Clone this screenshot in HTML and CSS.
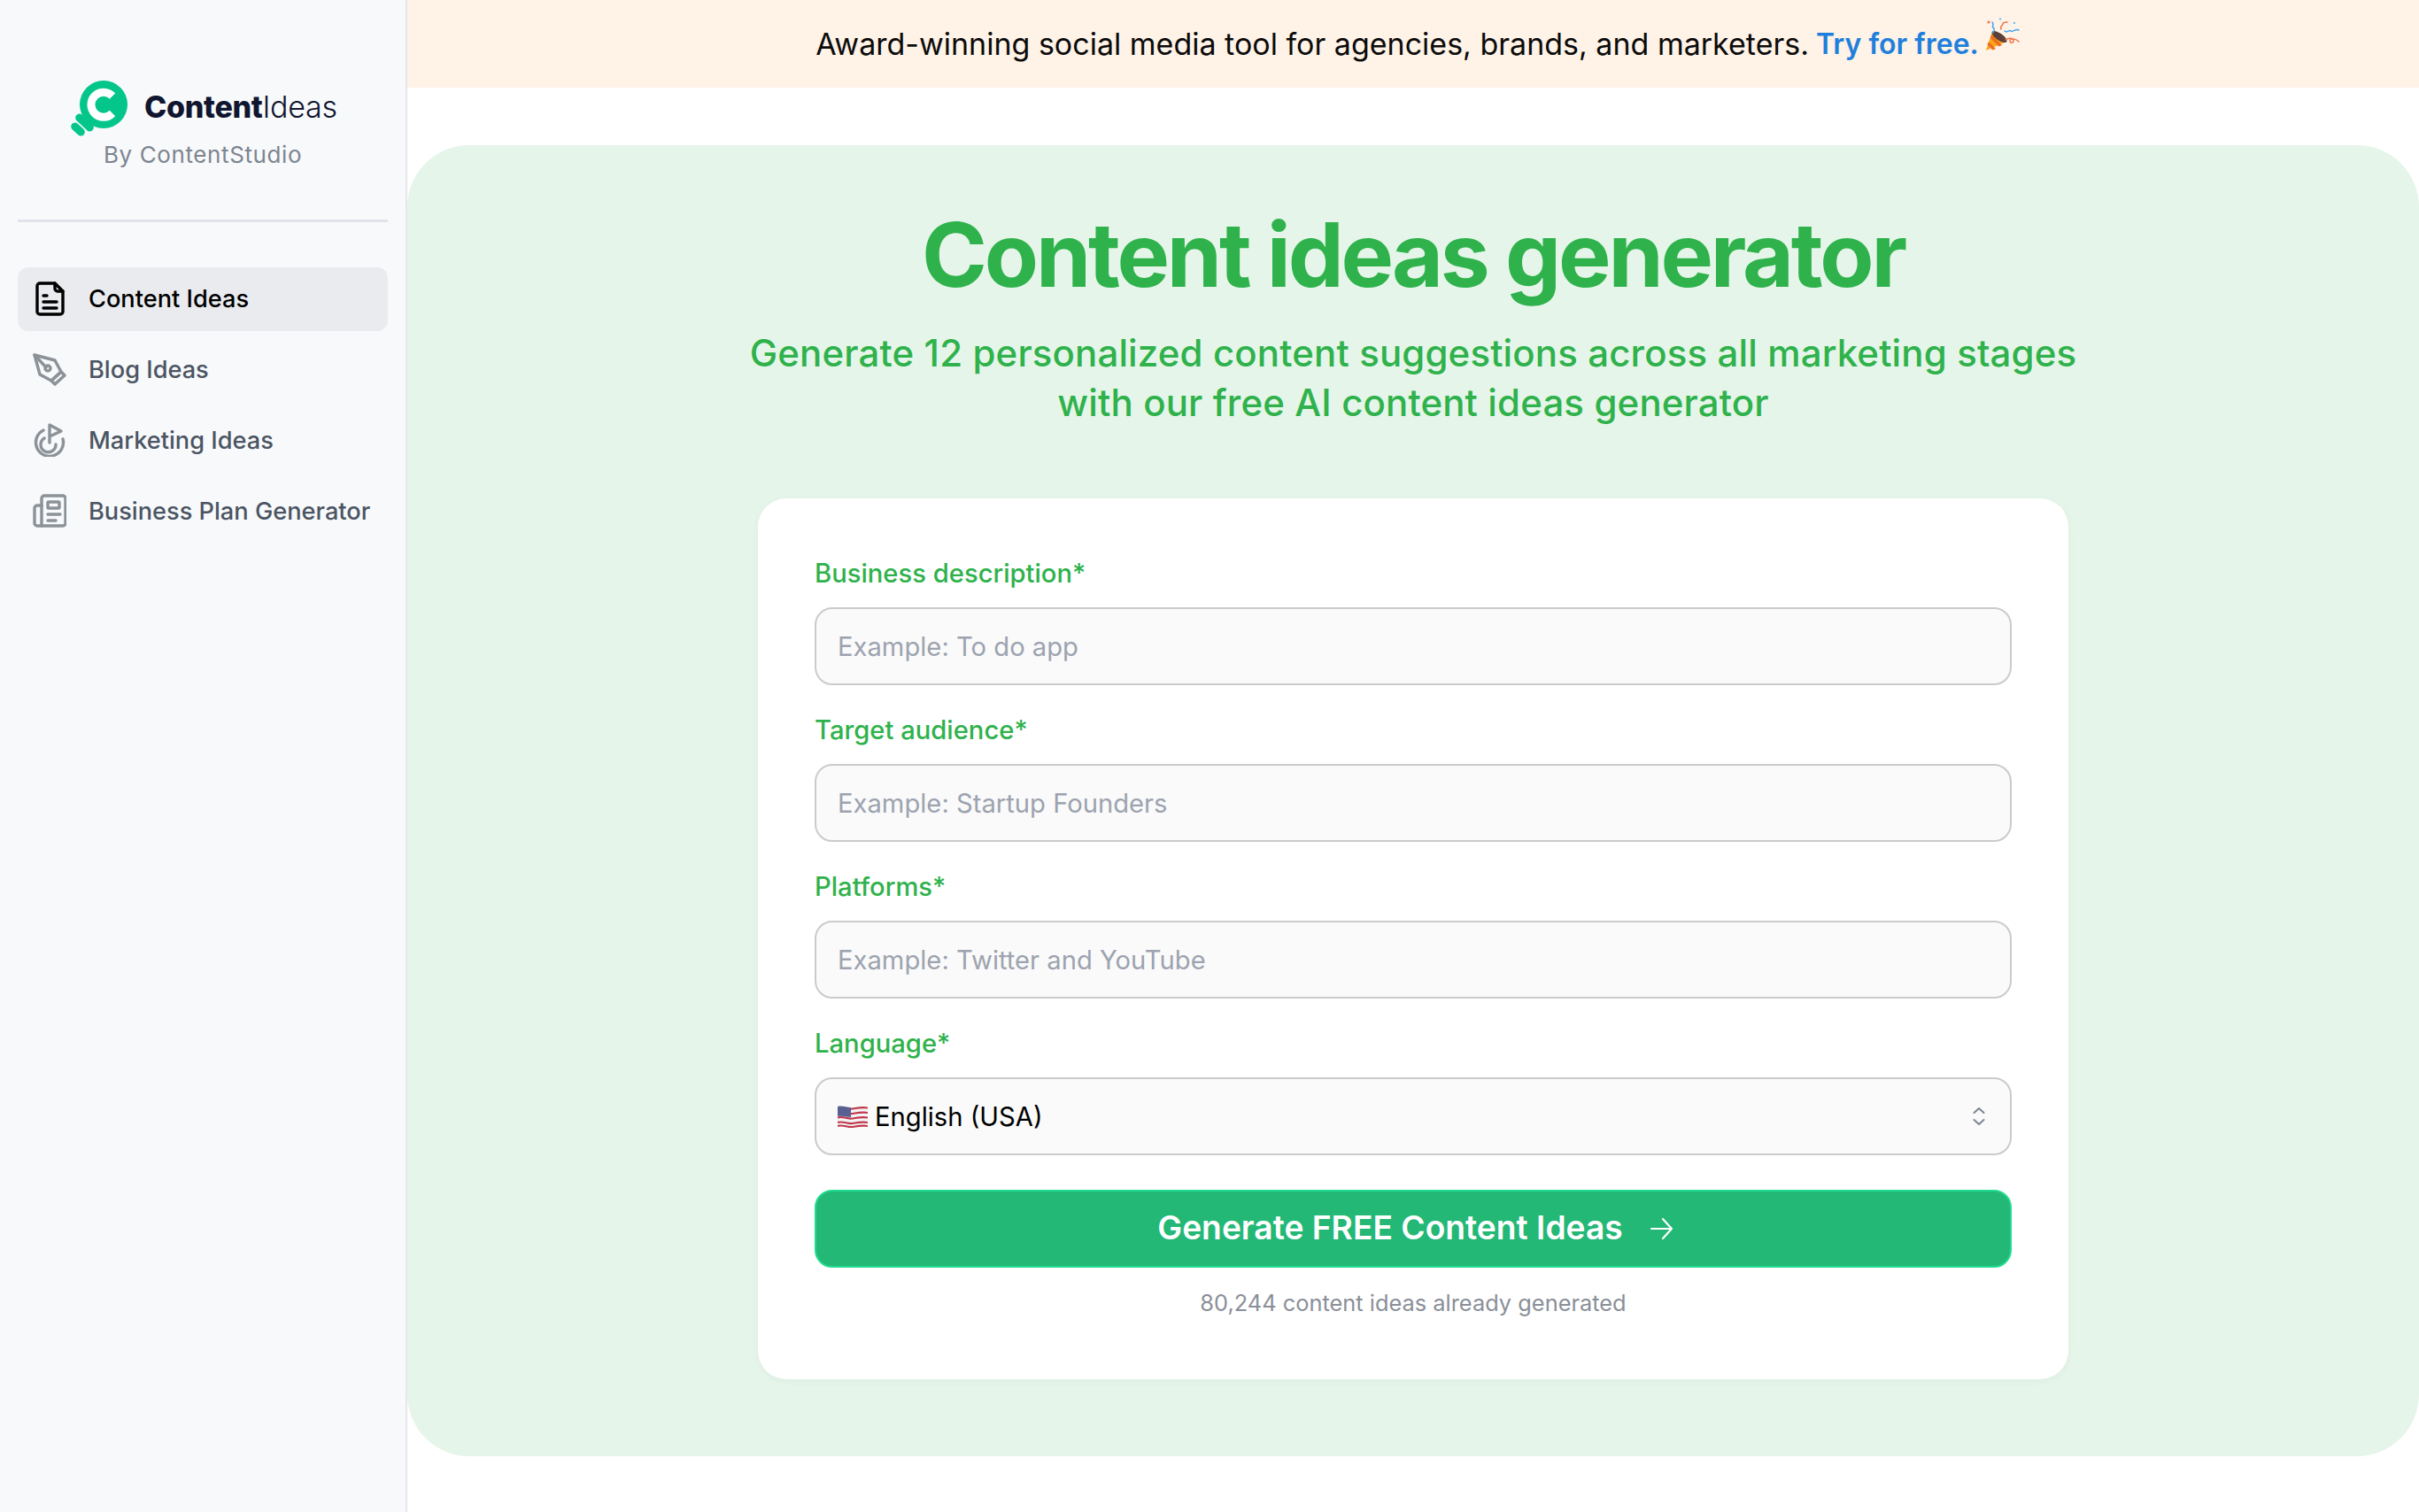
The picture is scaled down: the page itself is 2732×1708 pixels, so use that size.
FILE: index.html

```html
<!DOCTYPE html>
<html lang="en">
<head>
    <meta charset="UTF-8">
    <title>Content Ideas Generator</title>
    <link rel="stylesheet" href="styles.css">
</head>
<body>
<aside class="sidebar">
    <div class="brand">
        <div class="logo">
            <svg class="logo-mark" width="68" height="64" viewBox="0 0 68 64">
                <circle cx="39" cy="28" r="27" fill="#04c68a"/>
                <path d="M49 18.500A14 14 0 1 0 49 38" fill="none" stroke="#fff" stroke-width="9"/>
                <rect x="5" y="44" width="25" height="9" rx="4.500" transform="rotate(43 17.500 48.500)" fill="#04c68a"/>
                <rect x="1" y="51.500" width="18" height="9" rx="4.500" transform="rotate(43 10 56)" fill="#04c68a"/>
            </svg>
            <span class="logo-text"><b>Content</b>Ideas</span>
        </div>
        <div class="brand-by">By ContentStudio</div>
    </div>
    <nav class="nav">
        <a class="nav-item active">
            <svg class="nav-icon" viewBox="0 0 36 40" width="36" height="40" fill="none" stroke="currentColor" stroke-width="3.400" stroke-linejoin="round" stroke-linecap="round">
                <path d="M7 3h17l9 9v23a3 3 0 0 1-3 3H7a3 3 0 0 1-3-3V6a3 3 0 0 1 3-3z"/>
                <path d="M24 3v6a3 3 0 0 0 3 3h6"/>
                <path d="M11 17h4M11 24h15M11 31h15"/>
            </svg>
            Content Ideas
        </a>
        <a class="nav-item">
            <svg class="nav-icon" viewBox="0 0 38 38" width="38" height="38" fill="none" stroke="currentColor" stroke-width="3.400" stroke-linejoin="round" stroke-linecap="round">
                <path d="M2 3l23 6 7 13-11 10-13-7z"/>
                <path d="M2 3l13 14"/>
                <circle cx="17" cy="18" r="3"/>
                <path d="M21 32l11-10 4 4-11 10z"/>
            </svg>
            Blog Ideas
        </a>
        <a class="nav-item">
            <svg class="nav-icon" viewBox="0 0 36 38" width="36" height="38" fill="none" stroke="currentColor" stroke-width="3.400" stroke-linejoin="round" stroke-linecap="round">
                <path d="M11 8a15.500 15.500 0 1 0 22 10"/>
                <path d="M12 17a8.500 8.500 0 1 0 13 7"/>
                <path d="M18 22V2l13 7-13 6"/>
            </svg>
            Marketing Ideas
        </a>
        <a class="nav-item">
            <svg class="nav-icon" viewBox="0 0 38 38" width="38" height="38" fill="none" stroke="currentColor" stroke-width="3.400" stroke-linejoin="round" stroke-linecap="round">
                <path d="M10 36h24a3 3 0 0 0 3-3V5a3 3 0 0 0-3-3H13a3 3 0 0 0-3 3v31z"/>
                <path d="M10 13H5a3 3 0 0 0-3 3v17a3 3 0 0 0 3 3h5"/>
                <rect x="17" y="9" width="13" height="7" rx="1"/>
                <path d="M17 23h14M17 30h9"/>
            </svg>
            Business Plan Generator
        </a>
    </nav>
</aside>

<main class="main">
    <div class="banner">
        Award-winning social media tool for agencies, brands, and marketers.
        <a class="banner-link">Try for free.</a>
        <svg class="popper" width="38" height="38" viewBox="0 0 38 38">
            <path d="M7 16L0 37l23-10z" fill="#f9a814"/>
            <path d="M3 27l8 8-3.500 1.500-6-6zM6 19l12 12-3.500 1.500L5 23z" fill="#f06c23"/>
            <ellipse cx="15" cy="21.500" rx="4" ry="10" transform="rotate(-55 15 21.500)" fill="#5d4037"/>
            <g fill="none" stroke-width="1.500" stroke-linecap="round">
                <path d="M7 5c3 3-2 5 2 7 1 1 0 3-1 5" stroke="#42a5f5"/>
                <path d="M17 13c-2-3 2-4 2-6s3-2 5-2" stroke="#f0744a"/>
                <path d="M21 15c3 3 5-2 7 0s5-3 9-1" stroke="#42a5f5"/>
                <path d="M22 25c4-3 9-2 9 1s-4 3-4 0 6-3 10 1" stroke="#f0744a"/>
            </g>
            <circle cx="3" cy="5" r="1.500" fill="#f0744a"/>
            <circle cx="16" cy="1.500" r="1" fill="#42a5f5"/>
            <circle cx="32" cy="6" r="1" fill="#42a5f5"/>
        </svg>
    </div>

    <section class="panel">
        <h1 class="title">Content ideas generator</h1>
        <p class="subtitle">Generate 12 personalized content suggestions across all marketing stages<br>with our free AI content ideas generator</p>

        <form class="card">
            <label class="field-label" for="business">Business description*</label>
            <input class="field" id="business" type="text" placeholder="Example: To do app">

            <label class="field-label" for="audience">Target audience*</label>
            <input class="field" id="audience" type="text" placeholder="Example: Startup Founders">

            <label class="field-label" for="platforms">Platforms*</label>
            <input class="field" id="platforms" type="text" placeholder="Example: Twitter and YouTube">

            <label class="field-label">Language*</label>
            <div class="field select">
                <svg class="flag" width="34" height="26" viewBox="0 0 34 26">
                    <path d="M0 2c6-2 11 2 17 1s11-2 17-1v22c-6-1-11 0-17 1S6 22 0 24z" fill="#f4f4f6"/>
                    <g fill="none" stroke="#c0394b" stroke-width="2.200">
                        <path d="M0 3.500c6-2 11 2 17 1s11-2 17-1"/>
                        <path d="M0 9c6-2 11 2 17 1s11-2 17-1"/>
                        <path d="M0 14.500c6-2 11 2 17 1s11-2 17-1"/>
                        <path d="M0 20c6-2 11 2 17 1s11-2 17-1"/>
                        <path d="M0 24c6-2 11 2 17 1s11-2 17-1"/>
                    </g>
                    <path d="M0 2c5-1.500 10 1 15 1v11c-5 0-10-2-15-1z" fill="#5a5f92"/>
                </svg>
                <span>English (USA)</span>
                <svg class="chevrons" width="14" height="22" viewBox="0 0 14 22" fill="none" stroke="#7d8694" stroke-width="2" stroke-linecap="round" stroke-linejoin="round">
                    <path d="M1.500 7L7 2l5.500 5M1.500 15L7 20l5.500-5"/>
                </svg>
            </div>

            <button class="submit" type="button">
                Generate FREE Content Ideas
                <svg class="submit-arrow" width="28" height="28" viewBox="0 0 28 28" fill="none" stroke="#fff" stroke-width="2.200" stroke-linecap="round" stroke-linejoin="round">
                    <path d="M2 14h23M15 3l10 11-10 11"/>
                </svg>
            </button>
            <p class="count">80,244 content ideas already generated</p>
        </form>
    </section>
</main>
</body>
</html>
```

FILE: styles.css

```css
* {
    box-sizing: border-box;
}
body {
    margin: 0;
    display: flex;
    min-height: 1708px;
    font-family: Inter, "Noto Sans", sans-serif;
    background: #fff;
    color: #000;
}
.sidebar {
    flex: 0 0 460px;
    background: #f8f9fb;
    border-right: 2px solid #e5e7eb;
    padding: 0 20px;
}
.brand {
    height: 251px;
    padding-top: 90px;
    border-bottom: 3px solid #e1e3ea;
}
.logo {
    display: flex;
    align-items: center;
    margin-left: 58px;
}
.logo-text {
    margin: 0 0 3px 17px;
    font-size: 34px;
    font-weight: 300;
    color: #10162f;
    letter-spacing: -0.3px;
}
.logo-text b {
    font-weight: 800;
}
.brand-by {
    margin: 5px 0 0 97px;
    font-size: 26px;
    color: #7d8590;
    letter-spacing: 0.6px;
}
.nav {
    margin-top: 51px;
    display: flex;
    flex-direction: column;
    gap: 8px;
}
.nav-item {
    display: flex;
    align-items: center;
    height: 72px;
    padding-bottom: 2px;
    border-radius: 12px;
    font-size: 27.2px;
    font-weight: 500;
    color: #4b5563;
}
.nav-item.active {
    background: #e9ebee;
    color: #000;
}
.nav-icon {
    flex: none;
    margin: 0 25px 0 17px;
    width: 38px;
    color: #8b9298;
}
.active .nav-icon {
    color: #000;
}
.main {
    flex: 1;
    min-width: 0;
}
.banner {
    height: 99px;
    padding-left: 10px;
    background: #fff2e6;
    display: flex;
    align-items: center;
    justify-content: center;
    gap: 8px;
    font-size: 34px;
    color: #0b0b0b;
}
.banner-link {
    color: #1e80dc;
    font-size: 32px;
    font-weight: 600;
}
.popper {
    margin: -22px 0 0 0;
}
.panel {
    margin-top: 65px;
    height: 1481px;
    background: #e6f5e9;
    border-radius: 70px;
    padding-top: 68px;
}
.title {
    margin: 0;
    text-align: center;
    font-size: 100px;
    line-height: 112px;
    font-weight: 700;
    color: #2fb24c;
    letter-spacing: -3.2px;
}
.subtitle {
    margin: 27px 0 0;
    text-align: center;
    font-size: 42px;
    line-height: 56px;
    font-weight: 500;
    letter-spacing: 0.13px;
    color: #2fb24c;
}
.card {
    width: 1480px;
    height: 995px;
    margin: 80px auto 0;
    padding: 61px 64px 0;
    background: #fff;
    border-radius: 32px;
    box-shadow: 0 2px 8px rgba(0, 0, 0, 0.04);
}
.field-label {
    display: block;
    height: 62px;
    padding-top: 4px;
    font-size: 29.2px;
    line-height: 40px;
    font-weight: 500;
    color: #2fb24c;
}
.field {
    display: block;
    width: 100%;
    height: 88px;
    margin-bottom: 27px;
    padding: 0 24px;
    border: 2px solid #cbcbcb;
    border-radius: 20px;
    background: #fafafa;
    font-family: inherit;
    font-size: 29.2px;
    color: #000;
}
.field::placeholder {
    color: #9ca3af;
}
.select {
    display: flex;
    align-items: center;
    gap: 8px;
    padding-right: 28px;
}
.select span {
    flex: 1;
}
.submit {
    display: flex;
    align-items: center;
    justify-content: center;
    gap: 30px;
    width: 100%;
    height: 88px;
    margin-top: 39px;
    padding: 0 0 3px 6px;
    border: 2px solid #20dc8f;
    border-radius: 20px;
    background: #23b876;
    color: #fff;
    font-family: inherit;
    font-size: 37.2px;
    font-weight: 600;
}
.submit-arrow {
    margin-top: 3px;
}
.count {
    margin: 24px 0 0;
    text-align: center;
    font-size: 25.4px;
    line-height: 32px;
    color: #8a8f99;
}
```
